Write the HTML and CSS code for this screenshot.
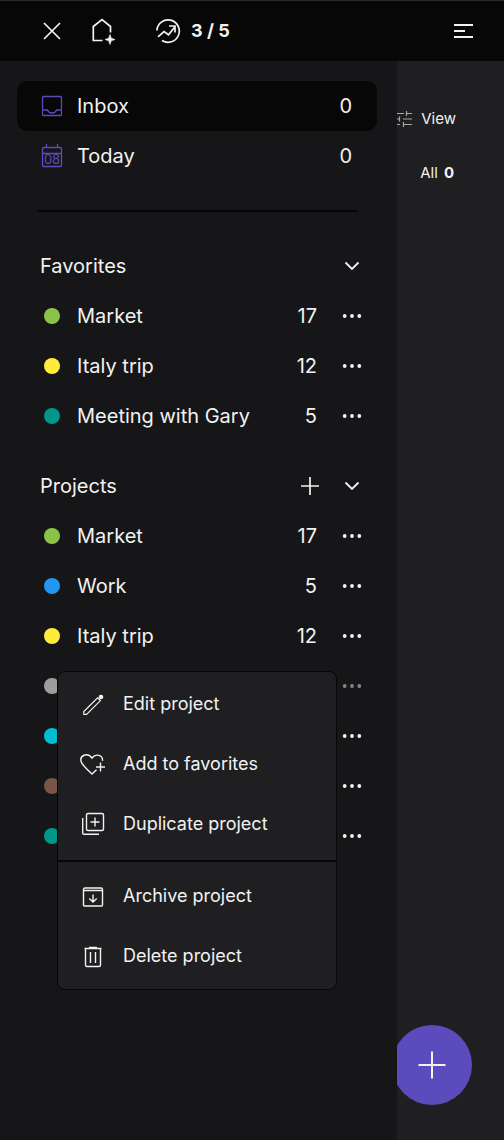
FILE: index.html
```html
<!DOCTYPE html>
<html lang="en">
<head>
<meta charset="utf-8">
<meta name="viewport" content="width=device-width, initial-scale=1">
<title>Inbox</title>
<link rel="stylesheet" href="styles.css">
</head>
<body>
<svg class="defs" aria-hidden="true">
  <symbol id="dots" viewBox="0 0 24 24"><g fill="currentColor"><circle cx="4.7" cy="12" r="1.9"/><circle cx="12" cy="12" r="1.9"/><circle cx="19.3" cy="12" r="1.9"/></g></symbol>
  <symbol id="chevron" viewBox="0 0 24 24"><path d="M5.500 8.500L12 15l6.500-6.500" fill="none" stroke="currentColor" stroke-width="1.800"/></symbol>
</svg>
<header class="topbar">
  <button class="icon-btn" aria-label="Close menu"><svg width="24" height="24" fill="none" stroke="currentColor" stroke-width="1.700"><path d="M4 4l16 16M20 4L4 20"/></svg></button>
  <button class="icon-btn home" aria-label="Home"><svg width="26" height="28" fill="none" stroke="currentColor" stroke-width="1.700"><path d="M14.500 23.500H5.300V9.500L14 2.500l8.500 7v6"/><path d="M22 17.500l1.300 3.700 3.700 1.300-3.700 1.300-1.300 3.700-1.300-3.700-3.700-1.300 3.700-1.300z" fill="currentColor" stroke="currentColor" stroke-width=".6"/></svg></button>
  <button class="progress"><svg width="26" height="26" fill="none" stroke="currentColor" stroke-width="1.700"><path d="M1.900 12.500A11.200 11.200 0 1 1 7 22.500"/><path d="M3 18.800l6-5.300 4.500 3.300 6.500-8M14 8h6v6.500"/></svg><span>3 / 5</span></button>
  <button class="icon-btn more" aria-label="More"><svg width="24" height="24" fill="none" stroke="currentColor" stroke-width="2"><path d="M3 6h19M3 12h11M3 18h19"/></svg></button>
</header>
<div class="shell">
  <main class="main">
    <button class="view"><svg width="20" height="20" fill="none" stroke="currentColor" stroke-width="1.200"><path d="M1 4.500h10M13.500 4.500H19M13.500 2v5M1 10h5M6.500 7.500v5M10 10h9M1 15.500h6M10.500 15.500H19M10.500 13v5"/></svg><span>View</span></button>
    <a class="filter" href="#all"><span>All</span><strong>0</strong></a>
  </main>
  <button class="fab" aria-label="Add task"><svg width="32" height="32" fill="none" stroke="currentColor" stroke-width="2"><path d="M16 2.500v27M2.500 16h27"/></svg></button>

  <nav class="drawer" aria-label="Lists">
    <a class="row inbox active" href="#inbox"><svg class="mark" width="24" height="24" fill="none" stroke="currentColor" stroke-width="1.300"><rect x="2.500" y="2.500" width="19" height="19" rx="1"/><path d="M2.500 16h5q1 3 4.500 3t4.500-3h5"/></svg><span class="name">Inbox</span><span>0</span></a>
    <a class="row inbox" href="#today"><svg class="mark" width="24" height="24" fill="none" stroke="currentColor" stroke-width="1.300"><rect x="2.500" y="3.500" width="19" height="19" rx="1"/><path d="M2.500 9.500h19M6.500 0v3.500M17.500 0v3.500"/><text class="day" x="12" y="20" text-anchor="middle">08</text></svg><span class="name">Today</span><span>0</span></a>
    <hr class="rule">

    <section class="group">
      <h2 class="row heading"><span class="name">Favorites</span><button class="icon-btn" aria-label="Collapse favorites"><svg width="24" height="24"><use href="#chevron"/></svg></button></h2>
      <ul class="list">
        <li class="row"><span class="dot lime"></span><a class="name" href="#market">Market</a><span>17</span><button class="icon-btn" aria-label="Market options"><svg width="24" height="24"><use href="#dots"/></svg></button></li>
        <li class="row"><span class="dot yellow"></span><a class="name" href="#italy">Italy trip</a><span>12</span><button class="icon-btn" aria-label="Italy trip options"><svg width="24" height="24"><use href="#dots"/></svg></button></li>
        <li class="row"><span class="dot teal"></span><a class="name" href="#gary">Meeting with Gary</a><span>5</span><button class="icon-btn" aria-label="Meeting options"><svg width="24" height="24"><use href="#dots"/></svg></button></li>
      </ul>
    </section>

    <section class="group">
      <h2 class="row heading"><span class="name">Projects</span><button class="icon-btn" aria-label="Add project"><svg width="24" height="24" fill="none" stroke="currentColor" stroke-width="1.700"><path d="M12 3v18M3 12h18"/></svg></button><button class="icon-btn" aria-label="Collapse projects"><svg width="24" height="24"><use href="#chevron"/></svg></button></h2>
      <ul class="list">
        <li class="row"><span class="dot lime"></span><a class="name" href="#market">Market</a><span>17</span><button class="icon-btn" aria-label="Market options"><svg width="24" height="24"><use href="#dots"/></svg></button></li>
        <li class="row"><span class="dot blue"></span><a class="name" href="#work">Work</a><span>5</span><button class="icon-btn" aria-label="Work options"><svg width="24" height="24"><use href="#dots"/></svg></button></li>
        <li class="row"><span class="dot yellow"></span><a class="name" href="#italy">Italy trip</a><span>12</span><button class="icon-btn" aria-label="Italy trip options"><svg width="24" height="24"><use href="#dots"/></svg></button></li>
        <li class="row"><span class="dot grey"></span><span class="name"></span><button class="icon-btn pressed" aria-label="Project options" aria-expanded="true"><svg width="24" height="24"><use href="#dots"/></svg></button>
          <div class="menu">
            <button class="item"><svg width="26" height="26" fill="none" stroke="currentColor" stroke-width="1.200"><path d="M3.800 23.400v-2.800L17.600 6.800l2.800 2.800L6.600 23.400z"/><circle cx="21" cy="6" r="2.300" fill="currentColor" stroke="none"/></svg><span>Edit project</span></button>
            <button class="item"><svg width="26" height="26" fill="none" stroke="currentColor" stroke-width="1.400"><path d="M22.500 9.800c.6-5.500-6.800-8-10.500-2.800C7.500.800-1 4.500 1.300 11c1.200 3.500 6 7.500 10.700 12l4.500-4.200M20.500 11.500v9M16 16h9"/></svg><span>Add to favorites</span></button>
            <button class="item"><svg width="26" height="26" fill="none" stroke="currentColor" stroke-width="1.400"><rect x="6.500" y="2.500" width="17" height="17" rx="1.500"/><path d="M2.700 7v15q0 1.300 1.300 1.300H19M15 6.500v9M10.500 11h9"/></svg><span>Duplicate project</span></button>
            <hr class="menu-rule">
            <button class="item"><svg width="26" height="26" fill="none" stroke="currentColor" stroke-width="1.400"><path d="M3.500 7.500V6.500q0-1.500 1.500-1.500h16q1.500 0 1.500 1.500V7.500M3.500 7.500h19v14.500q0 1-1 1h-17q-1 0-1-1zM13 11.500v7.500M9.300 15.500L13 19l3.700-3.500"/></svg><span>Archive project</span></button>
            <button class="item"><svg width="26" height="26" fill="none" stroke="currentColor" stroke-width="1.400"><path d="M4.500 5.500h17M9 4.500h8M5.500 5.500V22q0 1.500 1.500 1.500h12q1.500 0 1.500-1.500V5.500M10.500 9v11M15.500 9v11"/></svg><span>Delete project</span></button>
          </div>
        </li>
        <li class="row"><span class="dot cyan"></span><span class="name"></span><button class="icon-btn" aria-label="Project options"><svg width="24" height="24"><use href="#dots"/></svg></button></li>
        <li class="row"><span class="dot brown"></span><span class="name"></span><button class="icon-btn" aria-label="Project options"><svg width="24" height="24"><use href="#dots"/></svg></button></li>
        <li class="row"><span class="dot teal"></span><span class="name"></span><button class="icon-btn" aria-label="Project options"><svg width="24" height="24"><use href="#dots"/></svg></button></li>
      </ul>
    </section>
  </nav>
</div>
</body>
</html>
```
FILE: styles.css
```css
* { box-sizing: border-box; }
body {
  margin: 0;
  min-height: 100vh;
  display: flex;
  flex-direction: column;
  background: #1f1f21;
  color: #f2f2f2;
  font: 20px/30px Inter, "Liberation Sans", sans-serif;
}
button {
  display: flex;
  align-items: center;
  margin: 0;
  padding: 0;
  border: 0;
  background: none;
  color: inherit;
  font: inherit;
  cursor: pointer;
}
a { color: inherit; text-decoration: none; }
svg { display: block; flex: none; overflow: visible; }
.defs { position: absolute; width: 0; height: 0; }

.topbar {
  display: flex;
  align-items: center;
  height: 61px;
  padding: 0 29px 0 40px;
  background: #070707;
  box-shadow: inset 0 1px #2a2a2b;
}
.home { margin-left: 24px; }
.progress { gap: 10px; margin-left: 41px; font-size: 18px; font-weight: 700; }
.more { margin-left: auto; }

.shell { position: relative; flex: 1; display: flex; }
.main {
  flex: 1;
  display: flex;
  flex-direction: column;
  align-items: flex-end;
  gap: 24px;
  padding: 43px 48px 0 0;
  font-size: 15px;
}
.view { gap: 8px; }
.view svg { color: #a8a8a8; }
.filter { display: flex; gap: 6px; padding-right: 2px; }
.filter strong { font-weight: 700; }
.fab {
  position: absolute;
  right: 32px;
  bottom: 35px;
  width: 80px;
  height: 80px;
  justify-content: center;
  border-radius: 50%;
  background: #5b4bbd;
}

/* The drawer slides over the main column. */
.drawer {
  position: absolute;
  top: 0;
  bottom: 0;
  left: 0;
  width: 397px;
  max-width: 100%;
  padding: 20px 20px 0 17px;
  background: #161618;
}
.row {
  position: relative;
  display: flex;
  align-items: center;
  height: 50px;
  padding: 0 13px 0 23px;
}
.row .icon-btn { margin-left: 23px; }
.name { flex: 1; }
.inbox { padding-right: 25px; border-radius: 10px; }
.active { background: #070707; }
.mark { margin-right: 13px; color: #5b4bbd; }
.day { fill: currentColor; stroke: none; font-size: 13px; }
.rule {
  height: 2px;
  margin: 29px 20px;
  border: 0;
  background: #070707;
}
.group { margin-bottom: 20px; }
.heading { margin: 0; font-size: 20px; font-weight: 400; }
.heading .icon-btn { margin-left: 18px; }
.list { margin: 0; padding: 0; list-style: none; }
.dot { width: 16px; height: 16px; margin: 0 17px 0 4px; border-radius: 50%; }
.lime { background: #8bc34a; }
.yellow { background: #ffeb3b; }
.teal { background: #009688; }
.blue { background: #2196f3; }
.grey { background: #9e9e9e; }
.cyan { background: #00bcd4; }
.brown { background: #795548; }
.pressed { opacity: 0.5; }

.menu {
  position: absolute;
  z-index: 1;
  top: 10px;
  left: 40px;
  width: 280px;
  padding: 2px 0 3px;
  border: 1px solid #070707;
  border-radius: 8px;
  background: #1f1f21;
  font-size: 18px;
}
.item { width: 100%; height: 60px; gap: 17px; padding: 0 22px; }
.menu-rule { height: 2px; margin: 6px 0 4px; border: 0; background: #070707; }
```
